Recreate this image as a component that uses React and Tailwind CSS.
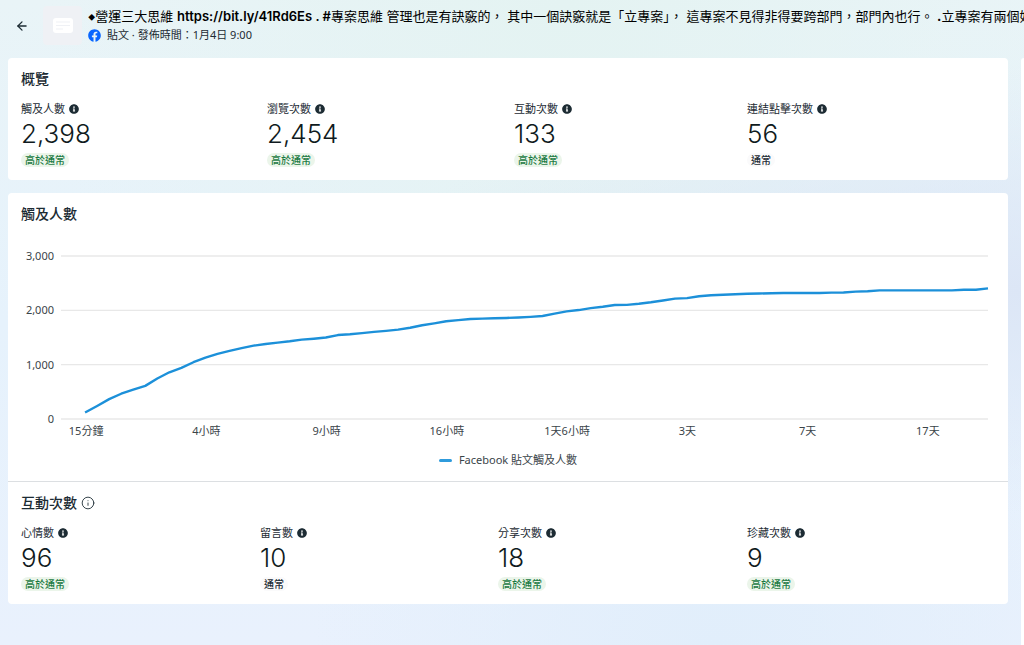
import { FaFacebook, FaInfoCircle } from 'react-icons/fa';
import { ArrowLeft, Info } from 'lucide-react';

const overview = [
  { label: '觸及人數', value: '2,398', high: true },
  { label: '瀏覽次數', value: '2,454', high: true },
  { label: '互動次數', value: '133', high: true },
  { label: '連結點擊次數', value: '56', high: false },
];

const engagement = [
  { label: '心情數', value: '96', high: true },
  { label: '留言數', value: '10', high: false },
  { label: '分享次數', value: '18', high: true },
  { label: '珍藏次數', value: '9', high: true },
];

const reach = [
  120, 240, 365, 465, 540, 610, 745, 860, 940, 1045,
  1130, 1200, 1255, 1305, 1350, 1380, 1405, 1430, 1460, 1478,
  1500, 1545, 1560, 1580, 1603, 1622, 1645, 1680, 1725, 1760,
  1800, 1820, 1840, 1848, 1853, 1860, 1868, 1880, 1895, 1940,
  1980, 2005, 2040, 2065, 2098, 2100, 2120, 2148, 2182, 2215,
  2225, 2260, 2278, 2288, 2296, 2305, 2310, 2315, 2320, 2320,
  2320, 2320, 2325, 2328, 2345, 2350, 2368, 2368, 2368, 2368,
  2368, 2368, 2368, 2378, 2380, 2405,
];

const yTicks = ['3,000', '2,000', '1,000', '0'];
const xTicks = ['15分鐘', '4小時', '9小時', '16小時', '1天6小時', '3天', '7天', '17天'];

// the series starts two steps after the left end of the axis
const points = reach.map((v, i) => `${i + 2},${3000 - v}`).join(' ');

function Metric({ label, value, high }) {
  return (
    <div>
      <dt className="flex items-center gap-1 text-[11px] leading-4">
        {label}
        <FaInfoCircle className="size-[10px] text-[#1c2b33]" />
      </dt>
      <dd className="flex flex-col items-start gap-[2px]">
        <span className="font-[Inter,sans-serif] text-[26px] leading-[34px] font-light text-[#0f1a20]">{value}</span>
        <span
          className={
            high
              ? 'rounded-full bg-[#ebf5ea] px-1 text-[10px] leading-[14px] font-medium text-[#1b7a43]'
              : 'rounded-full bg-[#fafafb] px-1 text-[10px] leading-[14px] font-medium'
          }
        >
          {high ? '高於通常' : '通常'}
        </span>
      </dd>
    </div>
  );
}

function ReachChart() {
  return (
    <figure className="pt-[23px] text-[#3a4449]">
      <div className="flex gap-[7px] pr-5">
        <div className="flex h-[181px] w-[46px] flex-col justify-between text-right text-[11px] leading-[18px]">
          {yTicks.map((tick) => (
            <span key={tick}>{tick}</span>
          ))}
        </div>
        <div className="min-w-0 flex-1 py-[9px]">
          <svg
            className="block h-[163px] w-full overflow-visible"
            viewBox="0 0 77 3000"
            preserveAspectRatio="none"
            fill="none"
          >
            {[0, 1000, 2000, 3000].map((y) => (
              <line key={y} x1="0" x2="77" y1={y} y2={y} stroke="#e8e8e8" strokeWidth="1.3" vectorEffect="non-scaling-stroke" />
            ))}
            <polyline points={points} stroke="#1c90d9" strokeWidth="2.4" strokeLinejoin="round" vectorEffect="non-scaling-stroke" />
          </svg>
        </div>
      </div>
      <div className="-mt-[5px] grid grid-cols-8 pr-5 pl-[18px] text-center text-[11px] leading-4">
        {xTicks.map((tick) => (
          <span key={tick}>{tick}</span>
        ))}
      </div>
      <figcaption className="mt-3 flex items-center justify-center gap-[7px] pb-3 text-[11px] leading-[18px]">
        <span className="h-[3px] w-[13px] rounded-full bg-[#2f9bdc]" />
        Facebook 貼文觸及人數
      </figcaption>
    </figure>
  );
}

export default function App() {
  return (
    <div className="flex min-h-screen flex-col overflow-hidden bg-[radial-gradient(ellipse_at_100%_45%,#dce6f6_0%,#dce6f600_45%),radial-gradient(ellipse_at_55%_0%,#e4f3f2_0%,#e4f3f200_65%),radial-gradient(ellipse_at_70%_100%,#e1eefb_0%,#e1eefb00_40%),linear-gradient(#e9f4f7,#e6f2fc_50%,#e9f1fd)] font-['Noto_Sans','Noto_Sans_CJK_TC',sans-serif] text-[#1c2b33]">
      <header className="flex h-[58px] items-start pt-[6px]">
        <button type="button" aria-label="返回" className="flex h-10 w-[43px] items-center justify-center">
          <ArrowLeft className="size-[14px]" strokeWidth={2.2} />
        </button>
        <div className="flex size-[39px] shrink-0 items-center justify-center rounded-sm bg-[#eff1f5]">
          <svg className="h-[15px] w-5" viewBox="0 0 20 15" fill="none">
            <rect width="20" height="15" rx="3" fill="#fff" />
            <path d="M3 4h14M3 7.5h14M3 11h7" stroke="#eff1f5" strokeWidth="1" />
          </svg>
        </div>
        <div className="min-w-0 flex-1 pl-[6px]">
          <h1 className="overflow-hidden font-[Inter,'Noto_Sans_CJK_TC',sans-serif] text-[13px] leading-5 font-normal whitespace-nowrap text-black">
            <span className="align-middle text-[7px] leading-none">◆</span>
            營運三大思維 <b className="font-semibold">https://bit.ly/41Rd6Es . #</b>專案思維 管理也是有訣竅的， 其中一個訣竅就是「立專案」， 這專案不見得非得要跨部門，部門內也行。 <b>.</b>立專案有兩個好處
          </h1>
          <p className="flex items-center gap-[6px] text-[11px] leading-[18px]">
            <FaFacebook className="size-[13px] text-[#0866ff]" />
            <span>貼文 · 發佈時間：1月4日 9:00</span>
          </p>
        </div>
      </header>

      <div className="flex flex-1 gap-[13px]">
        <main className="ml-2 flex min-w-0 flex-1 flex-col gap-[13px] pb-10">
          <section className="rounded bg-white px-[13px] pt-[11px] pb-[13px]">
            <h2 className="text-sm leading-5 font-medium">概覽</h2>
            <dl className="mt-3 grid grid-cols-[246fr_247fr_233fr_248fr]">
              {overview.map((item) => (
                <Metric key={item.label} {...item} />
              ))}
            </dl>
          </section>

          <section className="rounded bg-white">
            <h2 className="px-[13px] pt-[11px] text-sm leading-5 font-medium">觸及人數</h2>
            <ReachChart />
            <div className="border-t border-[#dcdfe2] px-[13px] pt-[11px] pb-[13px]">
              <h2 className="flex items-center gap-1 text-sm leading-5 font-medium">
                互動次數
                <Info className="size-[14px]" strokeWidth={1.5} />
              </h2>
              <dl className="mt-3 grid grid-cols-[239fr_238fr_249fr_248fr]">
                {engagement.map((item) => (
                  <Metric key={item.label} {...item} />
                ))}
              </dl>
            </div>
          </section>
        </main>
        <aside className="w-[3px] rounded-tl bg-white" />
      </div>
    </div>
  );
}
